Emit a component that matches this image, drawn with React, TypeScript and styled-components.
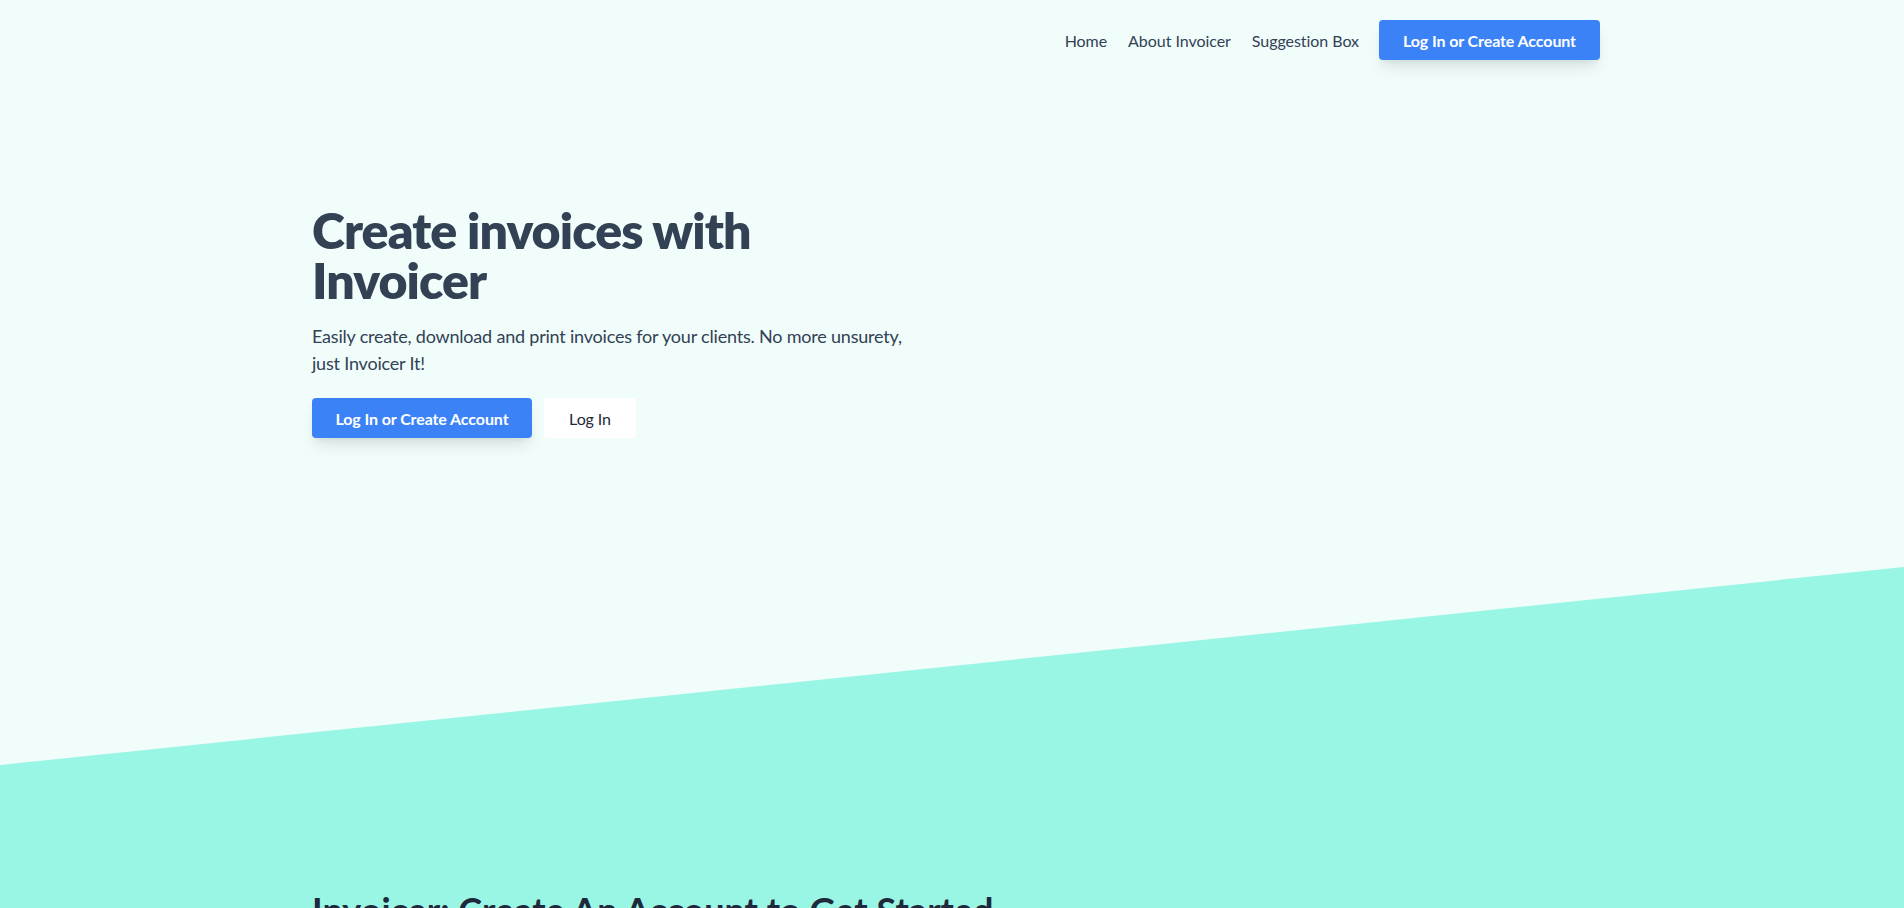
import React from "react";
import styled, { createGlobalStyle } from "styled-components";

const GlobalStyle = createGlobalStyle`
  * {
    box-sizing: border-box;
  }
  html,
  body {
    margin: 0;
    padding: 0;
    background: #f0fdfa;
    font-family: Lato, "Open Sans", sans-serif;
    color: #334155;
  }
`;

const Page = styled.div`
  width: 100%;
  min-height: 908px;
  overflow: hidden;
`;

const Container = styled.div`
  width: 1296px;
  margin: 0 auto;
  padding-left: 8px;
`;

const Nav = styled.nav`
  display: flex;
  justify-content: flex-end;
  align-items: center;
  gap: 21px;
  padding-top: 20px;
`;

const NavLink = styled.a`
  font-size: 16px;
  color: #334155;
  text-decoration: none;
  letter-spacing: -0.05px;
`;

const Button = styled.a<{ $variant?: "primary" | "plain" }>`
  display: inline-flex;
  align-items: center;
  justify-content: center;
  height: 40px;
  padding: 0 24px;
  border-radius: 4px;
  font-size: 16px;
  font-weight: 700;
  letter-spacing: -0.1px;
  text-decoration: none;
  white-space: nowrap;
  background: ${(p) => (p.$variant === "plain" ? "#ffffff" : "#3b82f6")};
  color: ${(p) => (p.$variant === "plain" ? "#1e293b" : "#ffffff")};
  box-shadow: ${(p) =>
    p.$variant === "plain"
      ? "none"
      : "0 10px 15px -3px rgba(0,0,0,0.1), 0 4px 6px -2px rgba(0,0,0,0.05)"};
`;

const NavButton = styled(Button)`
  width: 221px;
  margin-left: -1px;
`;

const Hero = styled.section`
  padding-top: 145px;
  padding-bottom: 129px;
`;

const HeroText = styled.div`
  width: 610px;
`;

const Title = styled.h1`
  margin: 0;
  max-width: 560px;
  font-size: 50px;
  line-height: 50px;
  font-weight: 800;
  letter-spacing: -0.9px;
  color: #334155;
`;

const Lead = styled.p`
  margin: 18px 0 0;
  font-size: 18px;
  line-height: 27px;
  letter-spacing: -0.2px;
  color: #334155;
`;

const Actions = styled.div`
  display: flex;
  gap: 12px;
  margin-top: 21px;
`;

const PrimaryAction = styled(Button)`
  width: 220px;
`;

const SecondaryAction = styled(Button)`
  width: 92px;
  font-weight: 400;
`;

const Slant = styled.div`
  height: 198px;
  background: #99f6e4;
  clip-path: polygon(0 100%, 100% 0, 100% 100%, 0 100%);
`;

const Features = styled.section`
  background: #99f6e4;
  padding-top: 125px;
  padding-bottom: 80px;
`;

const SectionTitle = styled.h2`
  margin: 0;
  font-size: 36px;
  line-height: 40px;
  font-weight: 700;
  color: #1e293b;
`;

export default function App() {
  return (
    <Page>
      <GlobalStyle />
      <Container>
        <Nav>
          <NavLink href="#">Home</NavLink>
          <NavLink href="#">About Invoicer</NavLink>
          <NavLink href="#">Suggestion Box</NavLink>
          <NavButton href="#">Log In or Create Account</NavButton>
        </Nav>
        <Hero>
          <HeroText>
            <Title>Create invoices with Invoicer</Title>
            <Lead>
              Easily create, download and print invoices for your clients. No
              more unsurety, just Invoicer It!
            </Lead>
            <Actions>
              <PrimaryAction href="#">Log In or Create Account</PrimaryAction>
              <SecondaryAction href="#" $variant="plain">
                Log In
              </SecondaryAction>
            </Actions>
          </HeroText>
        </Hero>
      </Container>
      <Slant />
      <Features>
        <Container>
          <SectionTitle>Invoicer: Create An Account to Get Started</SectionTitle>
        </Container>
      </Features>
    </Page>
  );
}
